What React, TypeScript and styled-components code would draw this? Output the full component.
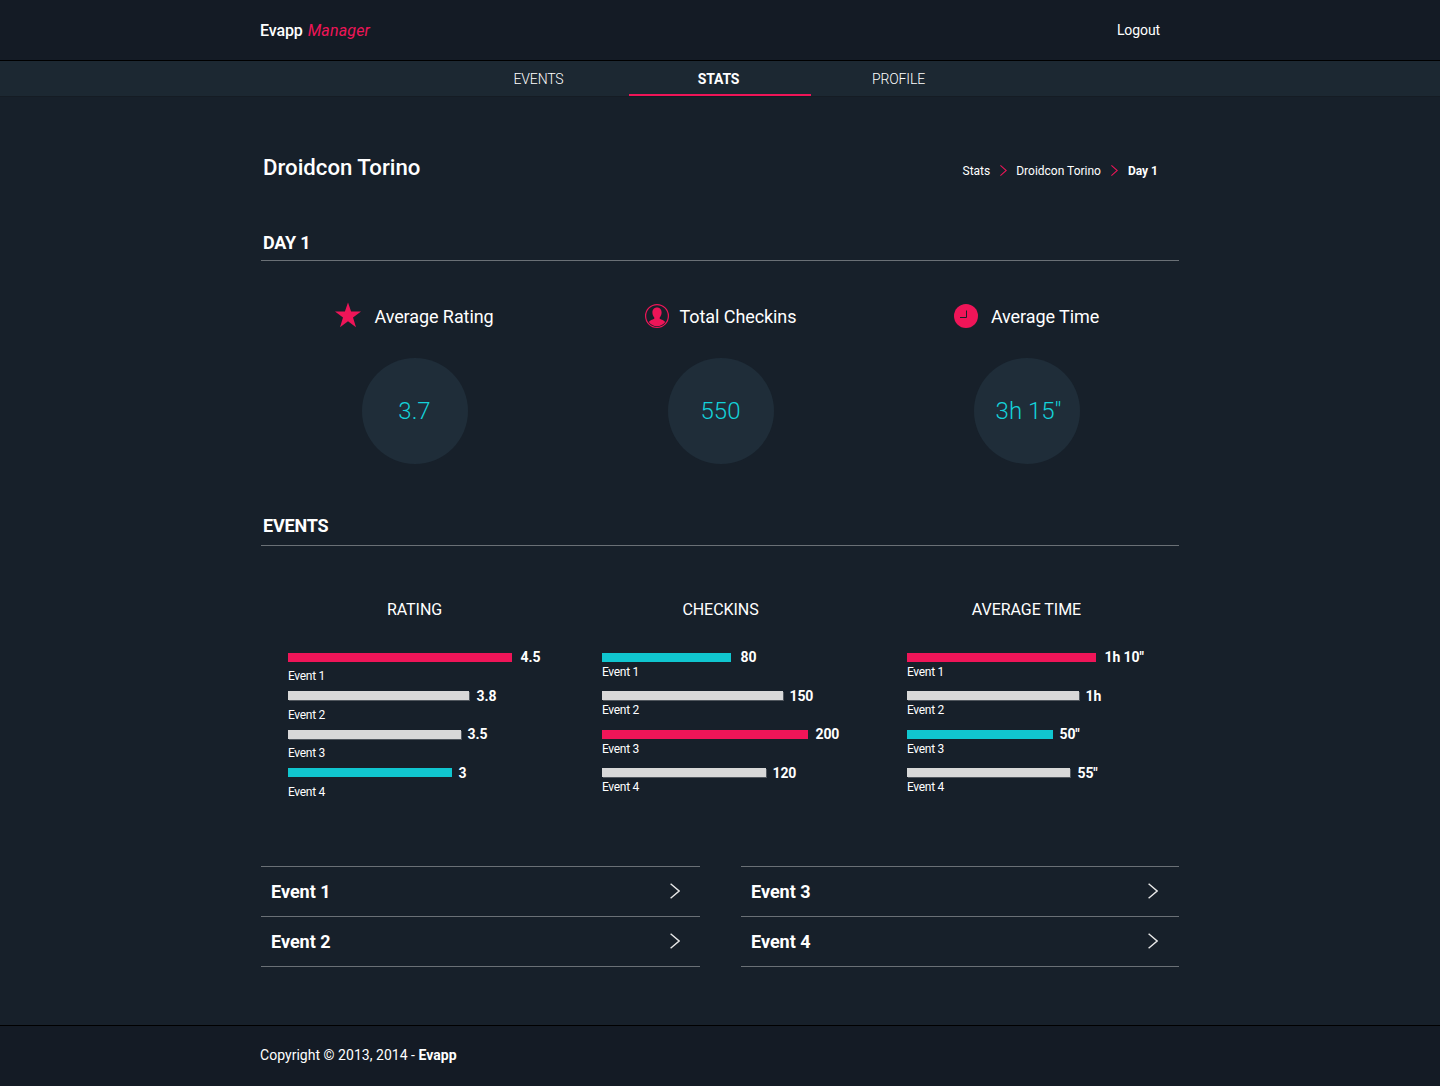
import * as React from 'react';
import styled, { createGlobalStyle } from 'styled-components';

const PINK = '#ef1558';
const CYAN = '#10c6cf';
const GREY = '#d8d8d8';

const GlobalStyle = createGlobalStyle`
  html, body {
    margin: 0;
    padding: 0;
    background: #17202a;
    color: #fff;
    font-family: Roboto, "Liberation Sans", sans-serif;
  }
  * { box-sizing: border-box; }
`;

/*************************************************************************/

const Header = styled.header`
  height: 61px;
  background: #141b25;
  border-bottom: 1px solid #000;
`;

const HeaderInner = styled.div`
  width: 920px;
  height: 60px;
  margin: 0 auto;
  padding-right: 20px;
  display: flex;
  justify-content: space-between;
  align-items: center;
`;

const Brand = styled.div`
  font-size: 16px;
  font-weight: 500;
  letter-spacing: -0.1px;
  & > em {
    color: ${PINK};
    font-weight: 400;
    letter-spacing: 0.15px;
    margin-left: 1px;
  }
`;

const Logout = styled.div`
  font-size: 14px;
  letter-spacing: -0.1px;
`;

const NavBar = styled.nav`
  height: 36px;
  padding-right: 1px;
  background: #1c2832;
  border-bottom: 1px solid #151c24;
  display: flex;
  justify-content: center;
`;

const NavItem = styled.div<{ $active?: boolean }>`
  width: 182px;
  margin: 0 -1px;
  padding-right: 2px;
  height: 35px;
  line-height: 37px;
  text-align: center;
  font-size: 14px;
  letter-spacing: -0.15px;
  font-weight: ${p => (p.$active ? 700 : 300)};
  border-bottom: 2px solid ${p => (p.$active ? PINK : 'transparent')};
`;

/*************************************************************************/

const Main = styled.main`
  width: 918px;
  margin: 0 auto;
  height: 928px;
  padding-top: 56px;
`;

const TitleRow = styled.div`
  display: flex;
  justify-content: space-between;
  align-items: center;
  height: 28px;
  padding: 0 21px 0 2px;
`;

const Title = styled.h1`
  margin: 0;
  font-size: 22.2px;
  font-weight: 500;
`;

const Crumbs = styled.div`
  display: flex;
  align-items: center;
  gap: 9.6px;
  font-size: 12px;
  padding-top: 7px;
  & > b { font-weight: 700; }
  & > svg:last-of-type { margin: 0 0.5px; }
`;

const SectionHead = styled.h2<{ $top: number; $line: number }>`
  margin: ${p => p.$top}px 0 0;
  padding: 0 2px;
  height: 36px;
  line-height: ${p => p.$line}px;
  font-size: 18px;
  font-weight: 700;
  letter-spacing: -0.2px;
  border-bottom: 1px solid #6a7076;
`;

const StatGrid = styled.div`
  display: grid;
  grid-template-columns: repeat(3, 306px);
  padding-top: 39px;
`;

const Stat = styled.div`
  display: flex;
  flex-direction: column;
  align-items: center;
`;

const StatHead = styled.div`
  display: flex;
  align-items: center;
  height: 32px;
  padding-left: 1px;
  font-size: 18px;
  letter-spacing: -0.08px;
`;

const StatIcon = styled.svg<{ $gap: number; $lift?: number }>`
  display: block;
  margin-right: ${p => p.$gap}px;
  margin-bottom: ${p => p.$lift ?? 0}px;
  flex: none;
`;

const Circle = styled.div<{ $nudge?: number }>`
  width: 106px;
  height: 106px;
  margin: 26px 0 0 1px;
  padding-left: ${p => p.$nudge ?? 0}px;
  border-radius: 50%;
  background: #1f2d39;
  color: #14d2da;
  font-size: 24px;
  font-weight: 300;
  display: flex;
  align-items: center;
  justify-content: center;
`;

const ChartGrid = styled.div`
  display: grid;
  grid-template-columns: repeat(3, 306px);
  padding-top: 54px;
`;

const ChartTitle = styled.div`
  text-align: center;
  font-size: 16px;
  letter-spacing: -0.05px;
  line-height: 20px;
  height: 39px;
  margin-bottom: 10px;
  padding-left: 1px;
`;

const ChartRows = styled.div<{ $pad: number }>`
  padding-left: ${p => p.$pad}px;
`;

const ChartRow = styled.div`
  height: 38.5px;
`;

const BarLine = styled.div`
  display: flex;
  align-items: center;
  height: 16px;
  font-size: 14px;
  font-weight: 700;
  letter-spacing: -0.1px;
`;

const Bar = styled.div<{ $color: string; $gap: number }>`
  height: 9px;
  margin-right: ${p => p.$gap}px;
  background: ${p => p.$color};
  box-shadow: 1px 1px 0 rgba(216, 216, 216, ${p => (p.$color === GREY ? 0.3 : 0)});
`;

const BarLabel = styled.div<{ $gap: number }>`
  margin-top: ${p => p.$gap}px;
  font-size: 12px;
  line-height: 14px;
  letter-spacing: -0.3px;
`;

const ListGrid = styled.div`
  display: grid;
  grid-template-columns: 439px 438px;
  column-gap: 41px;
  padding-top: 63px;
`;

const EventRow = styled.div<{ $right: number }>`
  height: 50px;
  padding: 0 ${p => p.$right}px 1px 10px;
  display: flex;
  align-items: center;
  justify-content: space-between;
  font-size: 18px;
  font-weight: 700;
  border-top: 1px solid #6a7076;
  &:last-child {
    height: 51px;
    border-bottom: 1px solid #6a7076;
  }
`;

const Footer = styled.footer`
  height: 61px;
  background: #141b25;
  border-top: 1px solid #000;
`;

const FooterInner = styled.div`
  width: 920px;
  height: 60px;
  margin: 0 auto;
  padding-bottom: 2px;
  display: flex;
  align-items: center;
  font-size: 14px;
  letter-spacing: 0.03px;
  white-space: pre;
  & > b { font-weight: 700; }
`;

/*************************************************************************/

const Chevron = ({ size, color, width = 1.2 }: { size: number; color: string; width?: number }) => (
  <svg width={size * 0.62} height={size} viewBox="0 0 10 16" fill="none" style={{ display: 'block' }}>
    <path d="M0.6 0.6 L9.2 8 L0.6 15.4" stroke={color} strokeWidth={width} />
  </svg>
);

const StarIcon = () => (
  <StatIcon $gap={13} $lift={3} width="26" height="26" viewBox="0 0 26 26">
    <polygon
      fill={PINK}
      points="13,0.5 16.1,9.6 26,9.6 18,15.5 21,25.2 13,19.3 5,25.2 8,15.5 0,9.6 9.9,9.6"
    />
  </StatIcon>
);

const PersonIcon = () => (
  <StatIcon $gap={11} width="24" height="24" viewBox="0 0 24 24">
    <circle cx="12" cy="12" r="11.4" fill="none" stroke={PINK} strokeWidth="1.2" />
    <path
      fill={PINK}
      d="M12 3.4c-3 0-4.6 2.2-4.6 5.2 0 2 .8 3.8 1.9 4.8v1.3c-1.9.9-4.4 1.6-5.5 3.2 1.8 2.6 4.8 4.2 8.2 4.2s6.4-1.6 8.2-4.2c-1.1-1.6-3.6-2.3-5.5-3.2v-1.3c1.1-1 1.9-2.8 1.9-4.8 0-3-1.6-5.2-4.6-5.2z"
    />
  </StatIcon>
);

const ClockIcon = () => (
  <StatIcon $gap={13} width="24" height="24" viewBox="0 0 24 24">
    <circle cx="12" cy="12" r="12" fill={PINK} />
    <path d="M12.5 6.5v7H6" fill="none" stroke="#17202a" strokeWidth="1" />
  </StatIcon>
);

const charts = [
  {
    title: 'RATING',
    pad: 27,
    gap: 4,
    rows: [
      { w: 224, c: PINK, v: '4.5', g: 8.5 },
      { w: 181, c: GREY, v: '3.8', g: 7.5 },
      { w: 173, c: GREY, v: '3.5', g: 6.5 },
      { w: 164, c: CYAN, v: '3', g: 6.5 }
    ]
  },
  {
    title: 'CHECKINS',
    pad: 35,
    gap: -0.3,
    rows: [
      { w: 129, c: CYAN, v: '80', g: 9.5 },
      { w: 181, c: GREY, v: '150', g: 6.5 },
      { w: 206, c: PINK, v: '200', g: 7.5 },
      { w: 164, c: GREY, v: '120', g: 6.5 }
    ]
  },
  {
    title: 'AVERAGE TIME',
    pad: 34,
    gap: -0.3,
    rows: [
      { w: 189, c: PINK, v: '1h 10\u2033', g: 8.5 },
      { w: 172, c: GREY, v: '1h', g: 6.5 },
      { w: 146, c: CYAN, v: '50\u2033', g: 6.5 },
      { w: 163, c: GREY, v: '55\u2033', g: 7.5 }
    ]
  }
];

const lists = [
  { right: 20, names: ['Event 1', 'Event 2'] },
  { right: 21, names: ['Event 3', 'Event 4'] }
];

const App = () => (
  <>
    <GlobalStyle />
    <Header>
      <HeaderInner>
        <Brand>
          Evapp <em>Manager</em>
        </Brand>
        <Logout>Logout</Logout>
      </HeaderInner>
    </Header>
    <NavBar>
      <NavItem>EVENTS</NavItem>
      <NavItem $active>STATS</NavItem>
      <NavItem>PROFILE</NavItem>
    </NavBar>
    <Main>
      <TitleRow>
        <Title>Droidcon Torino</Title>
        <Crumbs>
          <span>Stats</span>
          <Chevron size={11} color={PINK} width={1.5} />
          <span>Droidcon Torino</span>
          <Chevron size={11} color={PINK} width={1.5} />
          <b>Day 1</b>
        </Crumbs>
      </TitleRow>
      <SectionHead $top={44} $line={35}>DAY 1</SectionHead>
      <StatGrid>
        <Stat>
          <StatHead>
            <StarIcon />
            Average Rating
          </StatHead>
          <Circle>3.7</Circle>
        </Stat>
        <Stat>
          <StatHead>
            <PersonIcon />
            Total Checkins
          </StatHead>
          <Circle>550</Circle>
        </Stat>
        <Stat>
          <StatHead>
            <ClockIcon />
            Average Time
          </StatHead>
          <Circle $nudge={4}>3h 15{'\u2033'}</Circle>
        </Stat>
      </StatGrid>
      <SectionHead $top={46} $line={31}>EVENTS</SectionHead>
      <ChartGrid>
        {charts.map(chart => (
          <div key={chart.title}>
            <ChartTitle>{chart.title}</ChartTitle>
            <ChartRows $pad={chart.pad}>
              {chart.rows.map((row, i) => (
                <ChartRow key={i}>
                  <BarLine>
                    <Bar $color={row.c} $gap={row.g} style={{ width: row.w }} />
                    {row.v}
                  </BarLine>
                  <BarLabel $gap={chart.gap}>Event {i + 1}</BarLabel>
                </ChartRow>
              ))}
            </ChartRows>
          </div>
        ))}
      </ChartGrid>
      <ListGrid>
        {lists.map(col => (
          <div key={col.names[0]}>
            {col.names.map(name => (
              <EventRow key={name} $right={col.right}>
                {name}
                <Chevron size={16} color="#e8e8e8" width={1.4} />
              </EventRow>
            ))}
          </div>
        ))}
      </ListGrid>
    </Main>
    <Footer>
      <FooterInner>
        Copyright © 2013, 2014 - <b>Evapp</b>
      </FooterInner>
    </Footer>
  </>
);

export default App;
